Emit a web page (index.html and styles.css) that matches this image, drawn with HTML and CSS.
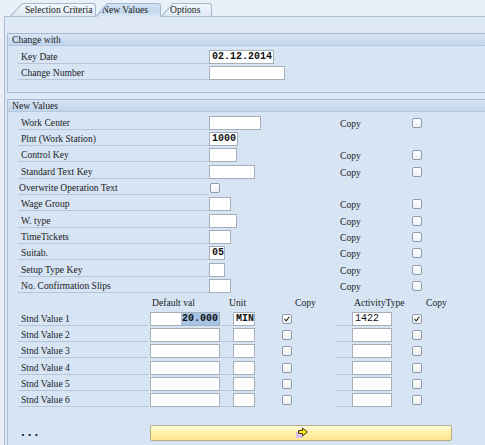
FILE: index.html
```html
<!DOCTYPE html>
<html>
<head>
<meta charset="utf-8">
<title>New Values</title>
<link rel="stylesheet" href="styles.css">
</head>
<body>
<div class="tabstrip">
  <div class="tab t-sel"><div class="tab-in">Selection Criteria</div></div>
  <div class="tab t-new active"><div class="tab-in">New Values</div></div>
  <div class="tab t-opt"><div class="tab-in">Options</div></div>
</div>
<div class="panel">
  <section class="group g-change">
    <div class="ghead">Change with</div>
    <div class="gbody">
      <div class="row">
        <div class="lbl">Key Date</div>
        <div><span class="inp mono w65">02.12.2014</span></div>
      </div>
      <div class="row">
        <div class="lbl">Change Number</div>
        <div><span class="inp w76"></span></div>
      </div>
    </div>
  </section>

  <section class="group g-new">
    <div class="ghead">New Values</div>
    <div class="gbody">
      <div class="row">
        <div class="lbl">Work Center</div>
        <div><span class="inp w52"></span></div>
        <div class="copy">Copy</div>
        <div><span class="cb"></span></div>
      </div>
      <div class="row">
        <div class="lbl">Plnt (Work Station)</div>
        <div><span class="inp mono w29">1000</span></div>
      </div>
      <div class="row">
        <div class="lbl">Control Key</div>
        <div><span class="inp w28"></span></div>
        <div class="copy">Copy</div>
        <div><span class="cb"></span></div>
      </div>
      <div class="row">
        <div class="lbl">Standard Text Key</div>
        <div><span class="inp w46"></span></div>
        <div class="copy">Copy</div>
        <div><span class="cb"></span></div>
      </div>
      <div class="row">
        <div class="lbl lbl-cb">Overwrite Operation Text</div>
        <div><span class="cb cb-in"></span></div>
      </div>
      <div class="row">
        <div class="lbl">Wage Group</div>
        <div><span class="inp w22"></span></div>
        <div class="copy">Copy</div>
        <div><span class="cb"></span></div>
      </div>
      <div class="row">
        <div class="lbl">W. type</div>
        <div><span class="inp w28"></span></div>
        <div class="copy">Copy</div>
        <div><span class="cb"></span></div>
      </div>
      <div class="row">
        <div class="lbl">TimeTickets</div>
        <div><span class="inp w22"></span></div>
        <div class="copy">Copy</div>
        <div><span class="cb"></span></div>
      </div>
      <div class="row">
        <div class="lbl">Suitab.</div>
        <div><span class="inp mono w16">05</span></div>
        <div class="copy">Copy</div>
        <div><span class="cb"></span></div>
      </div>
      <div class="row">
        <div class="lbl">Setup Type Key</div>
        <div><span class="inp w16"></span></div>
        <div class="copy">Copy</div>
        <div><span class="cb"></span></div>
      </div>
      <div class="row">
        <div class="lbl">No. Confirmation Slips</div>
        <div><span class="inp w22"></span></div>
        <div class="copy">Copy</div>
        <div><span class="cb"></span></div>
      </div>

      <div class="shead">
        <div></div>
        <div>Default val</div>
        <div>Unit</div>
        <div>Copy</div>
        <div>ActivityType</div>
        <div>Copy</div>
      </div>

      <div class="srow">
        <div class="lbl slbl">Stnd Value 1</div>
        <div><span class="inp mono num"><span class="sel">20.000</span></span></div>
        <div class="link"></div>
        <div><span class="inp mono">MIN</span></div>
        <div></div>
        <div><span class="cb on"><svg viewBox="0 0 10 10" width="8" height="8"><path d="M2 5.2 L4 7.4 L8 2.2" fill="none" stroke="#2a2a2a" stroke-width="1.4"/></svg></span></div>
        <div class="link"></div>
        <div><span class="inp mono light">1422</span></div>
        <div></div>
        <div><span class="cb on"><svg viewBox="0 0 10 10" width="8" height="8"><path d="M2 5.2 L4 7.4 L8 2.2" fill="none" stroke="#2a2a2a" stroke-width="1.4"/></svg></span></div>
      </div>
      <div class="srow">
        <div class="lbl slbl">Stnd Value 2</div>
        <div><span class="inp"></span></div>
        <div class="link"></div>
        <div><span class="inp"></span></div>
        <div></div>
        <div><span class="cb"></span></div>
        <div class="link"></div>
        <div><span class="inp"></span></div>
        <div></div>
        <div><span class="cb"></span></div>
      </div>
      <div class="srow">
        <div class="lbl slbl">Stnd Value 3</div>
        <div><span class="inp"></span></div>
        <div class="link"></div>
        <div><span class="inp"></span></div>
        <div></div>
        <div><span class="cb"></span></div>
        <div class="link"></div>
        <div><span class="inp"></span></div>
        <div></div>
        <div><span class="cb"></span></div>
      </div>
      <div class="srow">
        <div class="lbl slbl">Stnd Value 4</div>
        <div><span class="inp"></span></div>
        <div class="link"></div>
        <div><span class="inp"></span></div>
        <div></div>
        <div><span class="cb"></span></div>
        <div class="link"></div>
        <div><span class="inp"></span></div>
        <div></div>
        <div><span class="cb"></span></div>
      </div>
      <div class="srow">
        <div class="lbl slbl">Stnd Value 5</div>
        <div><span class="inp"></span></div>
        <div class="link"></div>
        <div><span class="inp"></span></div>
        <div></div>
        <div><span class="cb"></span></div>
        <div class="link"></div>
        <div><span class="inp"></span></div>
        <div></div>
        <div><span class="cb"></span></div>
      </div>
      <div class="srow">
        <div class="lbl slbl">Stnd Value 6</div>
        <div><span class="inp"></span></div>
        <div class="link"></div>
        <div><span class="inp"></span></div>
        <div></div>
        <div><span class="cb"></span></div>
        <div class="link"></div>
        <div><span class="inp"></span></div>
        <div></div>
        <div><span class="cb"></span></div>
      </div>

      <div class="foot">
        <div class="dots">...</div>
        <button class="btn" type="button"><svg viewBox="0 0 14 12" width="14" height="12"><rect x="1" y="5" width="7" height="6" fill="#dcbfe6"/><path d="M3.5 3.5 H7.5 V1 L12.5 5 L7.5 9 V6.5 H3.5 Z" fill="#ffe600" stroke="#3b3b3b" stroke-width="1" stroke-linejoin="miter"/></svg></button>
      </div>
    </div>
  </section>
</div>
</body>
</html>
```

FILE: styles.css
```css
html, body {
  margin: 0;
  padding: 0;
}
body {
  width: 485px;
  height: 445px;
  overflow: hidden;
  background: #e9f0f8;
  font-family: "Liberation Serif", "Times New Roman", serif;
  font-size: 9.6px;
  color: #1c1c1c;
}

/* tabs */
.tabstrip {
  height: 16px;
  display: flex;
  align-items: flex-end;
  padding-left: 10px;
}
.tab {
  position: relative;
  height: 13px;
  box-sizing: border-box;
  padding: 1px 1px 0 1px;
  background: #a3b8d2;
  clip-path: polygon(12px 0, calc(100% - 2px) 0, 100% 2px, 100% 100%, 0 100%);
}
.tab-in {
  height: 100%;
  box-sizing: border-box;
  line-height: 12px;
  background: linear-gradient(#f3f7fc, #dfe8f3);
  clip-path: polygon(11.5px 0, calc(100% - 1.5px) 0, 100% 1.5px, 100% 100%, 0.4px 100%);
  white-space: nowrap;
}
.t-sel { width: 86px; }
.t-sel .tab-in { padding-left: 14px; }
.t-new { width: 66px; margin-left: -1px; }
.t-new .tab-in { padding-left: 6px; }
.t-opt { width: 51px; }
.t-opt .tab-in { padding-left: 8px; }
.tab.active {
  z-index: 2;
  height: 14px;
  margin-bottom: -1px;
}
.tab.active .tab-in {
  background: linear-gradient(#d3e2f3, #c3d7ee 60%, #dfe9f5);
}

/* panel */
.panel {
  position: relative;
  margin-left: 4px;
  height: 428px;
  border-top: 1px solid #a9bdd6;
  border-left: 1px solid #a9bdd6;
  background: #dfe9f5;
  padding-left: 2px;
  overflow: hidden;
}
.group {
  border-left: 1px solid #a9bdd6;
}
.g-change {
  margin-top: 16px;
  border-bottom: 1px solid #a9bdd6;
}
.g-new {
  margin-top: 6px;
}
.ghead {
  height: 13px;
  box-sizing: border-box;
  border-top: 1px solid #a2b8d4;
  border-bottom: 1px solid #b3c7df;
  background: linear-gradient(#d8e5f4, #c2d5ec);
  padding-left: 4px;
  line-height: 12px;
  white-space: nowrap;
}
.gbody {
  background: #d6e4f4;
  padding: 3px 0 10px 10px;
}
.g-new .gbody {
  padding-bottom: 20px;
}

/* rows */
.row {
  display: grid;
  grid-template-columns: 191px 131px 72px 1fr;
  height: 16.33px;
  align-items: start;
}
.lbl {
  height: 15px;
  box-sizing: border-box;
  border-bottom: 1px solid #b7c5d6;
  padding-left: 3px;
  padding-top: 1px;
  line-height: 14px;
  white-space: nowrap;
}
.lbl-cb {
  padding-left: 1px;
}
.copy {
  line-height: 16px;
  padding-top: 1px;
}
.inp {
  display: block;
  height: 14px;
  margin-top: 1px;
  box-sizing: border-box;
  border: 1px solid #a6aeb8;
  background: #fff;
  padding: 0 2px;
  line-height: 12px;
  overflow: hidden;
  white-space: nowrap;
}
.mono {
  font-family: "Liberation Mono", "DejaVu Sans Mono", monospace;
  font-weight: bold;
  font-size: 10px;
  color: #111;
}
.mono.light {
  font-weight: normal;
}
.w65 { width: 65px; }
.w76 { width: 76px; }
.w52 { width: 52px; }
.w46 { width: 46px; }
.w29 { width: 29px; }
.w28 { width: 28px; }
.w22 { width: 22px; }
.w16 { width: 16px; }

.cb {
  display: flex;
  align-items: center;
  justify-content: center;
  width: 10px;
  height: 10px;
  margin-top: 3px;
  box-sizing: border-box;
  border: 1px solid #8e9cad;
  border-radius: 2px;
  background: linear-gradient(#ffffff, #eef0f3);
}
.cb-in {
  margin-left: 1px;
}

/* standard values */
.shead {
  display: grid;
  grid-template-columns: 134px 77px 66px 59px 72px 1fr;
  height: 16.33px;
  line-height: 16px;
  padding-top: 1px;
  box-sizing: border-box;
  white-space: nowrap;
}
.srow {
  display: grid;
  grid-template-columns: 132px 70px 13px 22px 27px 52px 18px 40px 20px 1fr;
  height: 16.33px;
  align-items: start;
}
.slbl {
  margin-right: 2px;
}
.link {
  height: 15px;
  box-sizing: border-box;
  border-bottom: 1px solid #b7c5d6;
  margin-left: 1px;
}
.num {
  text-align: right;
  padding-right: 0;
}
.sel {
  display: inline-block;
  height: 12px;
  background: #a7c3e5;
  padding-left: 1px;
  padding-right: 1px;
}

/* footer */
.foot {
  display: grid;
  grid-template-columns: 132px 302px;
  margin-top: 16.7px;
  align-items: center;
}
.dots {
  padding-left: 3px;
  font-family: "DejaVu Sans", sans-serif;
  font-weight: bold;
  font-size: 10px;
  letter-spacing: 3px;
  line-height: 16px;
  color: #222;
}
.btn {
  display: flex;
  align-items: center;
  justify-content: center;
  height: 16px;
  width: 302px;
  margin: 0;
  padding: 0;
  box-sizing: border-box;
  border: 1px solid #b4ac88;
  border-radius: 2px;
  background: linear-gradient(#fffbe0, #fff2b0 40%, #ffe68c);
}
.btn svg {
  display: block;
  margin-left: 1px;
}
```
